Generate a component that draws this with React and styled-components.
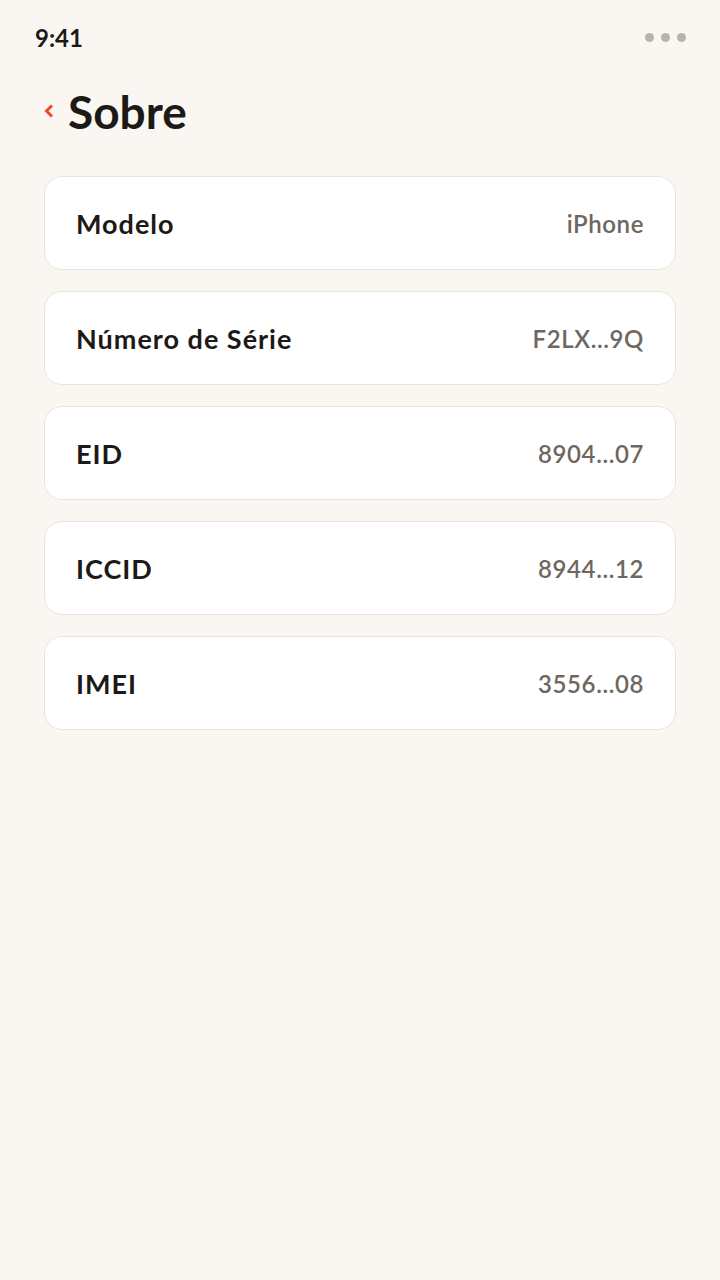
import styled, { createGlobalStyle } from "styled-components";

const GlobalStyle = createGlobalStyle`
  html, body {
    margin: 0;
    padding: 0;
    background: #faf7f2;
  }
  body {
    font-family: "Lato", "Noto Sans", sans-serif;
  }
`;

const items = [
  { label: "Modelo", value: "iPhone" },
  { label: "Número de Série", value: "F2LX...9Q" },
  { label: "EID", value: "8904...07" },
  { label: "ICCID", value: "8944...12" },
  { label: "IMEI", value: "3556...08" },
];

const App = () => {
  return (
    <Page>
      <GlobalStyle />
      <StatusBar>
        <Time>9:41</Time>
        <Dots>
          <Dot />
          <Dot />
          <Dot />
        </Dots>
      </StatusBar>
      <Header>
        <BackButton aria-label="Voltar">
          <svg width="10" height="14" viewBox="0 0 10 14">
            <path d="M8 1.5 L2.5 7 L8 12.5" fill="none" stroke="#f0472a" strokeWidth="3" />
          </svg>
        </BackButton>
        <Title>Sobre</Title>
      </Header>
      <List>
        {items.map((item) => (
          <Card key={item.label}>
            <Label>{item.label}</Label>
            <Value>{item.value}</Value>
          </Card>
        ))}
      </List>
    </Page>
  );
};

export default App;

const Page = styled.div`
  min-height: 1280px;
  background: #faf7f2;
  padding: 0 44px;
  box-sizing: border-box;
`;

const StatusBar = styled.div`
  height: 74px;
  display: flex;
  justify-content: space-between;
  align-items: center;
`;

const Time = styled.span`
  margin-left: -9px;
  font-size: 24px;
  font-weight: 700;
  color: #1c1917;
`;

const Dots = styled.div`
  display: flex;
  gap: 7px;
  margin-right: -10px;
`;

const Dot = styled.span`
  width: 9px;
  height: 9px;
  border-radius: 50%;
  background: #b9b1aa;
`;

const Header = styled.div`
  display: flex;
  align-items: center;
  gap: 14px;
  height: 74px;
  margin-bottom: 28px;
`;

const BackButton = styled.button`
  border: none;
  background: none;
  padding: 0;
  display: flex;
  align-items: center;
  cursor: pointer;
`;

const Title = styled.h1`
  margin: 0;
  font-size: 46px;
  font-weight: 700;
  color: #1c1917;
`;

const List = styled.div`
  display: flex;
  flex-direction: column;
  gap: 21px;
`;

const Card = styled.div`
  height: 94px;
  box-sizing: border-box;
  background: #ffffff;
  border: 1px solid #ebe4da;
  border-radius: 18px;
  padding: 0 31px;
  display: flex;
  align-items: center;
  justify-content: space-between;
`;

const Label = styled.span`
  font-size: 27px;
  font-weight: 700;
  letter-spacing: 1px;
  color: #1c1917;
`;

const Value = styled.span`
  font-size: 24px;
  font-weight: 600;
  letter-spacing: 0.6px;
  color: #6e6660;
`;
